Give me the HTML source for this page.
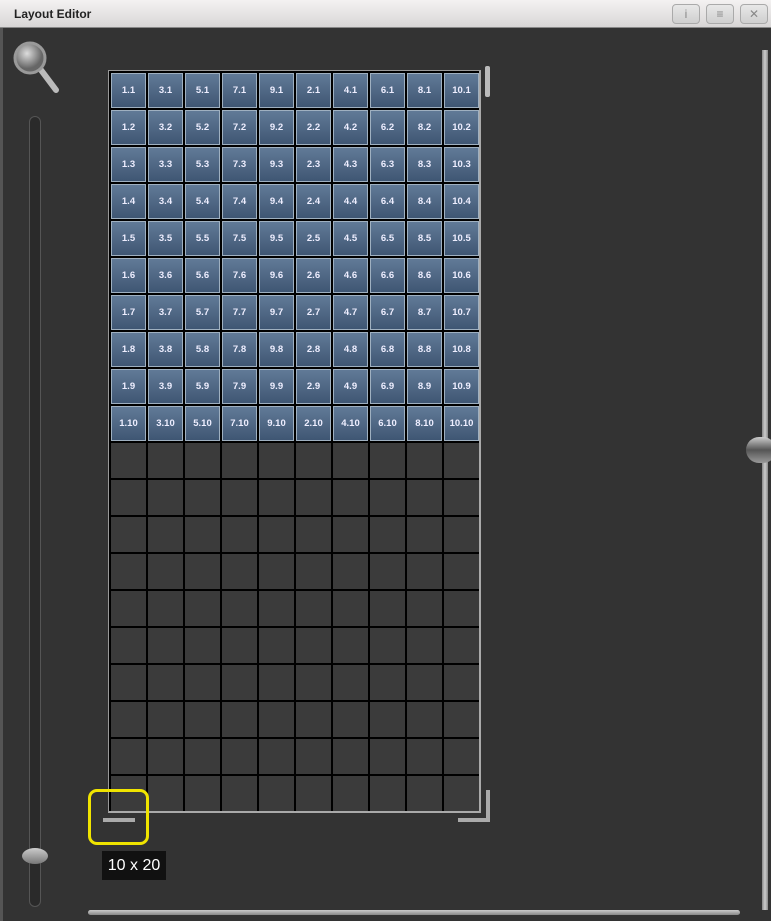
<!DOCTYPE html>
<html><head><style>
body{margin:0;width:771px;height:921px;background:#333;position:relative;overflow:hidden;font-family:"Liberation Sans",sans-serif}
.title{position:absolute;left:0;top:0;width:771px;height:27px;background:linear-gradient(#f4f2f2,#d8d6d6);border-bottom:1px solid #888}
.title span{position:absolute;left:14px;top:7px;font-size:12px;font-weight:bold;color:#222}
.btn{position:absolute;top:4px;width:26px;height:18px;border:1px solid #aaa;border-radius:4px;background:linear-gradient(#e8e8e8,#cfcfcf);color:#888;font-size:12px;text-align:center;line-height:18px}
.grid{position:absolute;left:108px;top:70px;width:370px;height:740px;border:1px solid #999;border-right:2px solid #aaa;border-bottom:2px solid #aaa;background:#000;overflow:hidden}
.c{position:absolute;width:35px;height:35px;box-sizing:border-box}
.b{background:linear-gradient(#617a97,#3f5673);border:1px solid #9fb0c0;color:#eef;font-size:9.5px;font-weight:bold;text-align:center;line-height:33px}
.d{background:#3b3b3b}
</style></head><body>
<div class="title"><span>Layout Editor</span>
<div class="btn" style="left:672px">i</div>
<div class="btn" style="left:706px">&#8801;</div>
<div class="btn" style="left:740px">✕</div></div>
<div style="position:absolute;left:0;top:28px;width:3px;height:893px;background:#555"></div>
<svg style="position:absolute;left:10px;top:38px" width="52" height="62"><defs><radialGradient id="g" cx="0.4" cy="0.35"><stop offset="0" stop-color="#ddd"/><stop offset="1" stop-color="#666"/></radialGradient></defs>
<line x1="28" y1="28" x2="46" y2="52" stroke="#bbb" stroke-width="6" stroke-linecap="round"/>
<circle cx="20" cy="20" r="15" fill="url(#g)" stroke="#999" stroke-width="3"/></svg>
<div style="position:absolute;left:29px;top:116px;width:10px;height:789px;border-radius:6px;background:#2a2a2a;border:1px solid #555"></div>
<div style="position:absolute;left:22px;top:848px;width:26px;height:16px;border-radius:50%;background:linear-gradient(#ccc,#777)"></div>
<div class="grid">
<script>
var cols=[1,3,5,7,9,2,4,6,8,10],h='';
for(var r=0;r<20;r++)for(var i=0;i<10;i++){var x=2+i*37,y=2+r*37;
if(r<10)h+='<div class="c b" style="left:'+x+'px;top:'+y+'px">'+cols[i]+'.'+(r+1)+'</div>';
else h+='<div class="c d" style="left:'+x+'px;top:'+y+'px"></div>';}
document.write(h);
</script>
</div>
<div style="position:absolute;left:485px;top:66px;width:5px;height:31px;background:#bbb;border-radius:2px"></div>
<div style="position:absolute;left:486px;top:790px;width:4px;height:31px;background:#aaa"></div>
<div style="position:absolute;left:458px;top:818px;width:32px;height:4px;background:#aaa"></div>
<div style="position:absolute;left:88px;top:789px;width:55px;height:50px;border:3px solid #f0e400;border-radius:9px"></div>
<div style="position:absolute;left:103px;top:818px;width:32px;height:4px;background:#aaa"></div>
<div style="position:absolute;left:102px;top:851px;width:64px;height:29px;background:#111;color:#fff;font-size:16px;text-align:center;line-height:29px">10 x 20</div>
<div style="position:absolute;left:762px;top:50px;width:6px;height:860px;background:linear-gradient(90deg,#888,#ccc,#888)"></div>
<div style="position:absolute;left:746px;top:437px;width:30px;height:26px;border-radius:13px;background:linear-gradient(#ccc,#555 50%,#999)"></div>
<div style="position:absolute;left:88px;top:910px;width:652px;height:5px;background:linear-gradient(#ccc,#888);border-radius:3px"></div>
</body></html>
